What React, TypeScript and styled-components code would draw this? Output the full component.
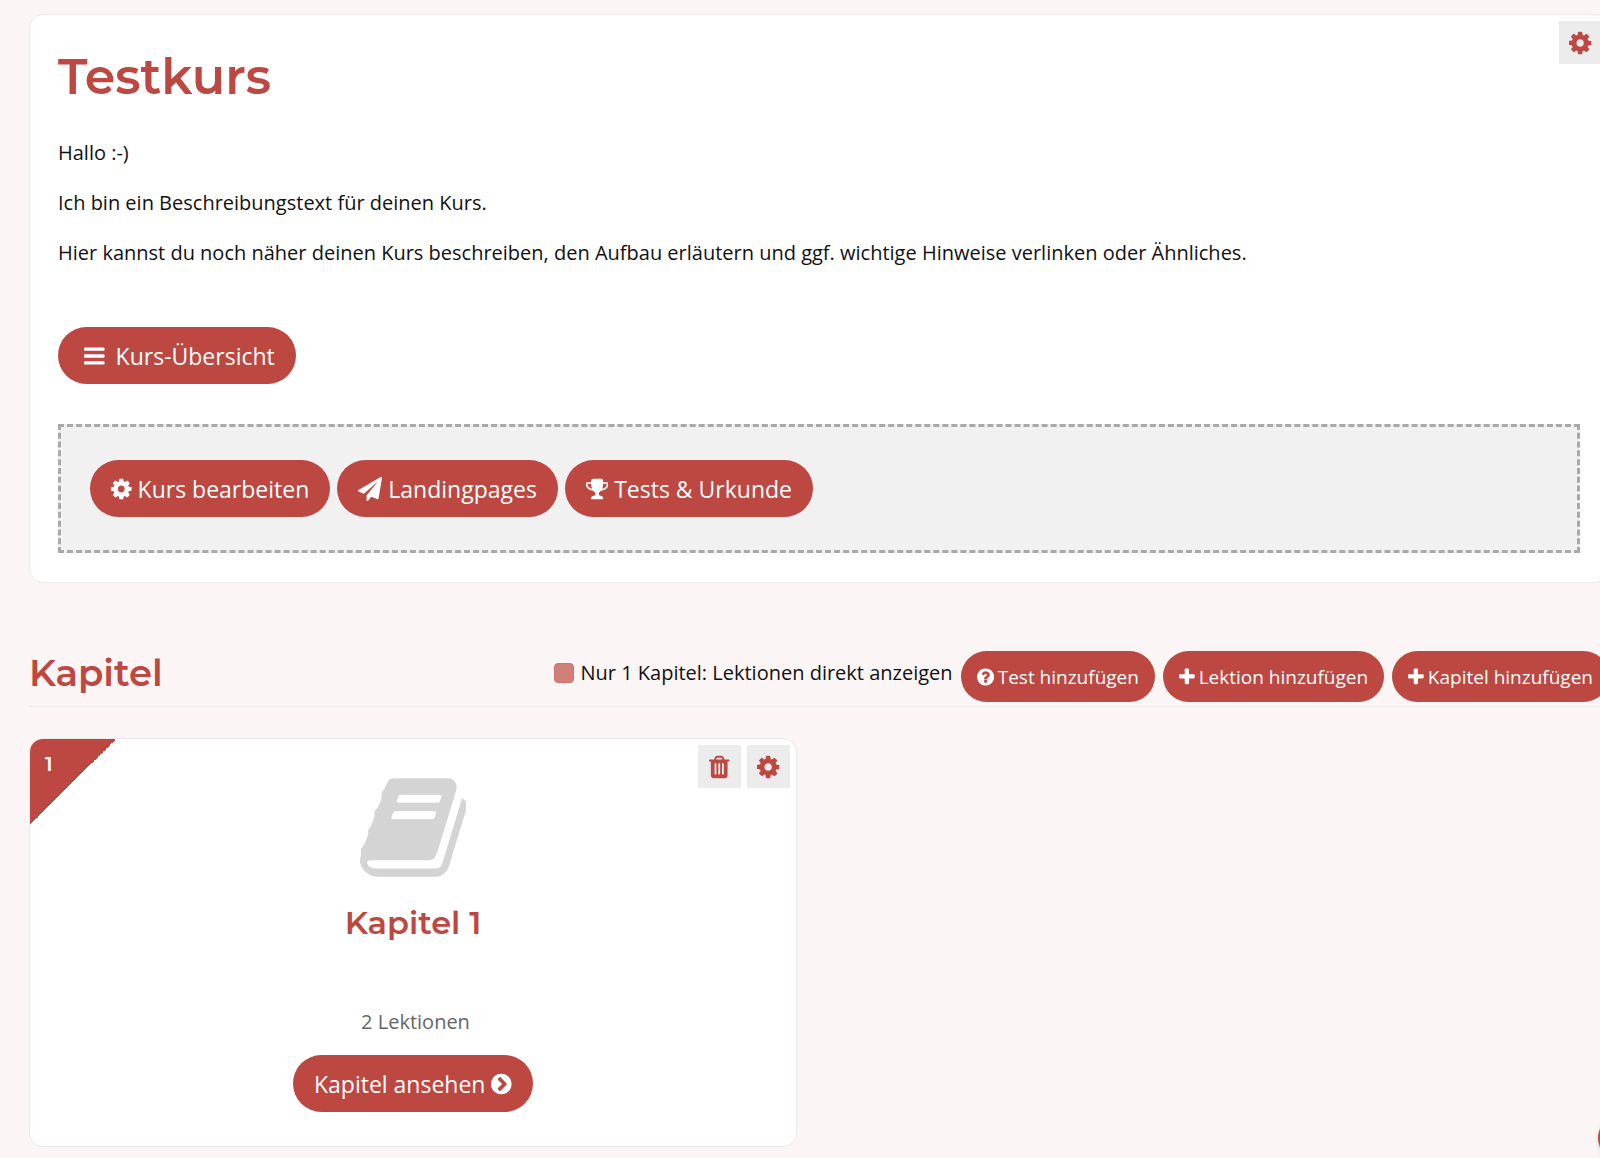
import React from "react";
import styled, { createGlobalStyle } from "styled-components";

const RED = "#bd4741";
const LINE = "#ebe9e9";

/* Each glyph: left edge, advance width and outline on a 1792-unit em. */
const ICONS = {
  cog: { x: 128, w: 1536, d: "M1152 896q0-106-75-181t-181-75-181 75-75 181 75 181 181 75 181-75 75-181zm512-109v222q0 12-8 23t-20 13l-185 28q-19 54-39 91 35 50 107 138 10 12 10 25t-9 23q-27 37-99 108t-94 71q-12 0-26-9l-138-108q-44 23-91 38-16 136-29 186-7 28-36 28h-222q-14 0-24.5-8.5t-11.5-21.5l-28-184q-49-16-90-37l-141 107q-10 9-25 9-14 0-25-11-126-114-165-168-7-10-7-23 0-12 8-23 15-21 51-66.5t54-70.5q-27-50-41-99l-183-27q-13-2-21-12.5t-8-23.5v-222q0-12 8-23t19-13l186-28q14-46 39-92-40-57-107-138-10-12-10-24 0-10 9-23 26-36 98.5-107.5t94.5-71.5q13 0 26 10l138 107q44-23 91-38 16-136 29-186 7-28 36-28h222q14 0 24.5 8.5t11.5 21.5l28 184q49 16 90 37l142-107q9-9 24-9 13 0 25 10 129 119 165 170 7 8 7 22 0 12-8 23-15 21-51 66.5t-54 70.5q26 50 41 98l183 28q13 2 21 12.5t8 23.5z" },
  plane: { x: 0, w: 1792, d: "M1764 11q33 24 27 64l-256 1536q-5 29-32 45-14 8-31 8-11 0-24-5l-453-185-242 295q-18 23-49 23-13 0-22-4-19-7-30.5-23.5t-11.5-36.5v-349l864-1059-1069 925-395-162q-37-14-40-55-2-40 32-59l1664-960q15-9 32-9 20 0 36 11z" },
  trophy: { x: 64, w: 1664, d: "M522 883q-74-162-74-371h-256v96q0 78 94.5 162t235.5 113zm1078-275v-96h-256q0 209-74 371 141-29 235.5-113t94.5-162zm128-128v128q0 71-41.5 143t-112 130-173 97.5-215.5 44.5q-42 54-95 95-38 34-52.5 72.5t-14.5 89.5q0 54 30.5 91t97.5 37q75 0 133.5 45.5t58.5 114.5v64q0 14-9 23t-23 9h-832q-14 0-23-9t-9-23v-64q0-69 58.5-114.5t133.5-45.5q67 0 97.5-37t30.5-91q0-51-14.5-89.5t-52.5-72.5q-53-41-95-95-113-5-215.5-44.5t-173-97.5-112-130-41.5-143v-128q0-40 28-68t68-28h288v-96q0-66 47-113t113-47h576q66 0 113 47t47 113v96h288q40 0 68 28t28 68z" },
  bars: { x: 128, w: 1536, d: "M1664 1344v128q0 26-19 45t-45 19h-1408q-26 0-45-19t-19-45v-128q0-26 19-45t45-19h1408q26 0 45 19t19 45zm0-512v128q0 26-19 45t-45 19h-1408q-26 0-45-19t-19-45v-128q0-26 19-45t45-19h1408q26 0 45 19t19 45zm0-512v128q0 26-19 45t-45 19h-1408q-26 0-45-19t-19-45v-128q0-26 19-45t45-19h1408q26 0 45 19t19 45z" },
  plus: { x: 192, w: 1408, d: "M1600 736v192q0 40-28 68t-68 28h-416v416q0 40-28 68t-68 28h-192q-40 0-68-28t-28-68v-416h-416q-40 0-68-28t-28-68v-192q0-40 28-68t68-28h416v-416q0-40 28-68t68-28h192q40 0 68 28t28 68v416h416q40 0 68 28t28 68z" },
  question: { x: 128, w: 1536, d: "M1024 1376v-192q0-14-9-23t-23-9h-192q-14 0-23 9t-9 23v192q0 14 9 23t23 9h192q14 0 23-9t9-23zm256-672q0-88-55.5-163t-138.5-116-170-41q-243 0-371 213-15 24 8 42l132 100q7 6 19 6 16 0 25-12 53-68 86-92 34-24 86-24 48 0 85.5 26t37.5 59q0 38-20 61t-68 45q-63 28-115.5 86.5t-52.5 125.5v36q0 14 9 23t23 9h192q14 0 23-9t9-23q0-19 21.5-49.5t54.5-49.5q32-18 49-28.5t46-35 44.5-48 28-60.5 12.5-81zm384 192q0 209-103 385.5t-279.5 279.5-385.5 103-385.5-103-279.5-279.5-103-385.5 103-385.5 279.5-279.5 385.5-103 385.5 103 279.5 279.5 103 385.5z" },
  chevron: { x: 128, w: 1536, d: "M845 1395l454-454q19-19 19-45t-19-45l-454-454q-19-19-45-19t-45 19l-102 102q-19 19-19 45t19 45l307 307-307 307q-19 19-19 45t19 45l102 102q19 19 45 19t45-19zm819-499q0 209-103 385.5t-279.5 279.5-385.5 103-385.5-103-279.5-279.5-103-385.5 103-385.5 279.5-279.5 385.5-103 385.5 103 279.5 279.5 103 385.5z" },
  trash: { x: 192, w: 1408, d: "M704 1376v-704q0-14-9-23t-23-9h-64q-14 0-23 9t-9 23v704q0 14 9 23t23 9h64q14 0 23-9t9-23zm256 0v-704q0-14-9-23t-23-9h-64q-14 0-23 9t-9 23v704q0 14 9 23t23 9h64q14 0 23-9t9-23zm256 0v-704q0-14-9-23t-23-9h-64q-14 0-23 9t-9 23v704q0 14 9 23t23 9h64q14 0 23-9t9-23zm-544-992h448l-48-117q-7-9-17-11h-317q-10 2-17 11zm928 32v64q0 14-9 23t-23 9h-96v948q0 83-47 143.5t-113 60.5h-832q-66 0-113-58.5t-47-141.5v-952h-96q-14 0-23-9t-9-23v-64q0-14 9-23t23-9h309l70-167q15-37 54-63t79-26h320q40 0 79 26t54 63l70 167h309q14 0 23 9t9 23z" },
  book: { x: 64, w: 1664, d: "M1703 478q40 57 18 129l-275 906q-19 64-76.5 107.5t-122.5 43.5h-923q-77 0-148.5-53.5t-99.5-131.5q-24-67-2-127 0-4 3-27t4-37q1-8-3-21.5t-3-19.5q2-11 8-21t16.5-23.5 16.5-23.5q23-38 45-91.5t30-91.5q3-10 .5-30t-.5-28q3-11 17-28t17-23q21-36 42-92t25-90q1-9-2.5-32t.5-28q4-13 22-30.5t22-22.5q19-26 42.5-84.5t27.5-96.5q1-8-3-25.5t-2-26.5q2-8 9-18t18-23 17-21q8-12 16.5-30.5t15-35 16-36 19.5-32 26.5-23.5 36-11.5 47.5 5.5l-1 3q38-9 51-9h761q74 0 114 56t18 130l-274 906q-36 119-71.5 153.5t-128.5 34.5h-869q-27 0-38 15-11 16-1 43 24 70 144 70h923q29 0 56-15.5t35-41.5l300-987q7-22 5-57 38 15 59 43zm-1064 2q-4 13 2 22.5t20 9.5h608q13 0 25.5-9.5t16.5-22.5l21-64q4-13-2-22.5t-20-9.5h-608q-13 0-25.5 9.5t-16.5 22.5zm-83 256q-4 13 2 22.5t20 9.5h608q13 0 25.5-9.5t16.5-22.5l21-64q4-13-2-22.5t-20-9.5h-608q-13 0-25.5 9.5t-16.5 22.5z" },
};

const Svg = styled.svg<{ $size: number }>`
  display: block;
  flex: none;
  width: auto;
  height: ${(p) => p.$size}px;
  fill: currentColor;
`;

function Icon({ name, size = 24 }: { name: keyof typeof ICONS; size?: number }) {
  const { x, w, d } = ICONS[name];
  return (
    <Svg viewBox={`${x} 0 ${w} 1792`} $size={size} aria-hidden="true">
      <path d={d} />
    </Svg>
  );
}

const GlobalStyle = createGlobalStyle`
  *, *::before, *::after { box-sizing: border-box; }
  body {
    margin: 0;
    background: #fbf5f5;
    color: #111;
    font: 400 20px/30px "Open Sans", "Noto Sans", sans-serif;
  }
`;

const Viewport = styled.div`
  min-height: 100vh;
  overflow: hidden;
`;

/* The content column runs slightly past the right edge of the window. */
const Page = styled.main`
  margin-right: -9px;
  padding: 14px 0 10px 29px;
`;

const Card = styled.section`
  position: relative;
  background: #fff;
  border: 1px solid ${LINE};
  border-radius: 14px;
`;

const CourseCard = styled(Card)`
  padding: 30px 28px 29px;
`;

const heading = `
  margin: 0;
  color: ${RED};
  font-family: Montserrat, Inter, "Open Sans", sans-serif;
  font-weight: 600;
`;

const PageTitle = styled.h1`
  ${heading}
  font-size: 49px;
  line-height: 64px;
`;

const Description = styled.div`
  margin-top: 29px;

  p {
    margin: 0 0 20px;
  }
`;

const Tools = styled.div`
  position: absolute;
  top: 6px;
  right: 6px;
  display: flex;
  gap: 6px;
`;

const ToolButton = styled.button`
  display: grid;
  place-items: center;
  width: 43px;
  height: 43px;
  padding: 0;
  border: 0;
  background: #ececec;
  color: ${RED};
  cursor: pointer;
`;

const Pill = styled.a<{ $small?: boolean }>`
  display: inline-flex;
  align-items: center;
  gap: ${(p) => (p.$small ? 4 : 6)}px;
  height: ${(p) => (p.$small ? 51 : 57)}px;
  padding: 0 ${(p) => (p.$small ? 16 : 21)}px;
  border-radius: 29px;
  background: ${RED};
  color: #fff;
  font-size: ${(p) => (p.$small ? 19 : 23)}px;
  text-decoration: none;
  white-space: nowrap;
`;

const OverviewPill = styled(Pill)`
  gap: 11px;
  padding-left: 26px;
`;

const Overview = styled.nav`
  display: flex;
  margin-top: 59px;
`;

const EditBar = styled.div`
  display: flex;
  flex-wrap: wrap;
  gap: 7px;
  margin-top: 40px;
  padding: 33px 29px;
  border: 3px dashed #a9a9a9;
  background: #f1f1f1;
`;

const ChapterHeader = styled.header`
  display: flex;
  align-items: flex-start;
  gap: 8px;
  margin-top: 68px;
  padding-bottom: 4px;
  border-bottom: 1px solid #e8ebe9;
`;

const SectionTitle = styled.h2`
  ${heading}
  flex: 1;
  font-size: 37px;
  line-height: 44px;
`;

const Toggle = styled.label`
  display: flex;
  align-items: center;
  gap: 6px;
  line-height: 44px;
`;

const Checkbox = styled.input`
  appearance: none;
  width: 20px;
  height: 20px;
  margin: 0;
  border: 1px solid #cf716d;
  border-radius: 4px;
  background: #d17d78;
`;

const ChapterGrid = styled.div`
  display: grid;
  grid-template-columns: repeat(2, 1fr);
  gap: 44px;
  margin-top: 31px;
`;

const ChapterCard = styled(Card)`
  display: flex;
  flex-direction: column;
  align-items: center;
  padding: 31px 28px 34px;
  overflow: hidden;
`;

const Corner = styled.span`
  ${heading}
  position: absolute;
  top: 0;
  left: 0;
  width: 86px;
  height: 86px;
  padding: 10px 15px;
  background: linear-gradient(135deg, ${RED} 50%, transparent 50%);
  color: #fff;
`;

const Cover = styled.div`
  color: #d4d4d4;
`;

const ChapterTitle = styled.h3`
  ${heading}
  margin-top: 18px;
  font-size: 32px;
  line-height: 40px;
`;

const Count = styled.p`
  margin: 64px 0 18px 5px;
  color: #666;
`;

const HelpBubble = styled.button`
  position: fixed;
  right: -42px;
  bottom: -2px;
  width: 44px;
  height: 44px;
  border: 0;
  border-radius: 50%;
  background: ${RED};
  box-shadow: 0 2px 4px rgba(0, 0, 0, 0.15);
`;

const editLinks = [
  { icon: "cog", label: "Kurs bearbeiten" },
  { icon: "plane", label: "Landingpages" },
  { icon: "trophy", label: "Tests & Urkunde" },
] as const;

const addActions = [
  { icon: "question", label: "Test hinzufügen" },
  { icon: "plus", label: "Lektion hinzufügen" },
  { icon: "plus", label: "Kapitel hinzufügen" },
] as const;

export default function App() {
  return (
    <Viewport>
      <GlobalStyle />
      <Page>
        <CourseCard>
          <PageTitle>Testkurs</PageTitle>
          <Tools>
            <ToolButton type="button" aria-label="Kurs-Einstellungen">
              <Icon name="cog" size={26} />
            </ToolButton>
          </Tools>
          <Description>
            <p>Hallo :-)</p>
            <p>Ich bin ein Beschreibungstext für deinen Kurs.</p>
            <p>
              Hier kannst du noch näher deinen Kurs beschreiben, den Aufbau erläutern und ggf. wichtige
              Hinweise verlinken oder Ähnliches.
            </p>
          </Description>
          <Overview>
            <OverviewPill href="#uebersicht">
              <Icon name="bars" />
              Kurs-Übersicht
            </OverviewPill>
          </Overview>
          <EditBar>
            {editLinks.map((l) => (
              <Pill key={l.label} href="#bearbeiten">
                <Icon name={l.icon} />
                {l.label}
              </Pill>
            ))}
          </EditBar>
        </CourseCard>

        <ChapterHeader>
          <SectionTitle>Kapitel</SectionTitle>
          <Toggle>
            <Checkbox type="checkbox" />
            Nur 1 Kapitel: Lektionen direkt anzeigen
          </Toggle>
          {addActions.map((a) => (
            <Pill key={a.label} href="#hinzufuegen" $small>
              <Icon name={a.icon} size={20} />
              {a.label}
            </Pill>
          ))}
        </ChapterHeader>

        <ChapterGrid>
          <ChapterCard as="article">
            <Corner>1</Corner>
            <Tools>
              <ToolButton type="button" aria-label="Kapitel löschen">
                <Icon name="trash" size={26} />
              </ToolButton>
              <ToolButton type="button" aria-label="Kapitel-Einstellungen">
                <Icon name="cog" size={26} />
              </ToolButton>
            </Tools>
            <Cover>
              <Icon name="book" size={115} />
            </Cover>
            <ChapterTitle>Kapitel 1</ChapterTitle>
            <Count>2 Lektionen</Count>
            <Pill href="#kapitel-1">
              Kapitel ansehen
              <Icon name="chevron" />
            </Pill>
          </ChapterCard>
        </ChapterGrid>
      </Page>
      <HelpBubble type="button" aria-label="Hilfe" />
    </Viewport>
  );
}
